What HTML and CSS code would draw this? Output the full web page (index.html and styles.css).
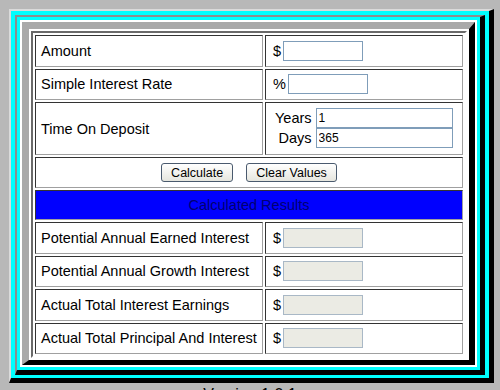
FILE: index.html
```html
<!DOCTYPE html>
<html lang="en">
<head>
    <meta charset="UTF-8">
    <meta name="viewport" content="width=device-width, initial-scale=1.0">
    <title>Simple Interest Calculator</title>
    <link rel="stylesheet" href="styles.css">
</head>
<body>

    <div class="frame-outer">
        <div class="frame-mid">
            <div class="frame-white">
                <div class="frame-inner">
                    <div class="calc">
                        <div class="cell label">Amount</div>
                        <div class="cell value">$<input type="text" class="field" id="amount"></div>

                        <div class="cell label">Simple Interest Rate</div>
                        <div class="cell value">%<input type="text" class="field" id="rate"></div>

                        <div class="cell label">Time On Deposit</div>
                        <div class="cell value">
                            <div class="time-grid">
                                <span>Years</span><input type="text" class="field wide" id="years" value="1">
                                <span>Days</span><input type="text" class="field wide" id="days" value="365">
                            </div>
                        </div>

                        <div class="cell actions">
                            <button class="btn" onclick="calculate()">Calculate</button>
                            <button class="btn" onclick="clearValues()">Clear Values</button>
                        </div>

                        <div class="cell results-head">Calculated Results</div>

                        <div class="cell label">Potential Annual Earned Interest</div>
                        <div class="cell value">$<input type="text" class="field output" id="earned" disabled></div>

                        <div class="cell label">Potential Annual Growth Interest</div>
                        <div class="cell value">$<input type="text" class="field output" id="growth" disabled></div>

                        <div class="cell label">Actual Total Interest Earnings</div>
                        <div class="cell value">$<input type="text" class="field output" id="total" disabled></div>

                        <div class="cell label">Actual Total Principal And Interest</div>
                        <div class="cell value">$<input type="text" class="field output" id="principal" disabled></div>
                    </div>
                </div>
            </div>
        </div>
    </div>

    <p class="version">Version 1.0.1</p>

    <script>
        function calculate() {
            const amount = parseFloat(document.getElementById("amount").value) || 0;
            const rate = parseFloat(document.getElementById("rate").value) || 0;
            const years = parseFloat(document.getElementById("years").value) || 0;
            const days = parseFloat(document.getElementById("days").value) || 365;

            const earned = amount * rate / 100;
            const growth = earned / amount * 100 || 0;
            const total = earned * years * (days / 365);

            document.getElementById("earned").value = earned.toFixed(2);
            document.getElementById("growth").value = growth.toFixed(2);
            document.getElementById("total").value = total.toFixed(2);
            document.getElementById("principal").value = (amount + total).toFixed(2);
        }

        function clearValues() {
            document.querySelectorAll(".field").forEach(function (field) {
                field.value = "";
            });
            document.getElementById("years").value = "1";
            document.getElementById("days").value = "365";
        }
    </script>

</body>
</html>
```

FILE: styles.css
```css
/* General Styles */
body {
    font-family: 'Liberation Sans', Arial, sans-serif;
    font-size: 14.5px;
    margin: 0;
    background: #b8b8b8;
    color: black;
}

/* Frames */
.frame-outer {
    margin: 9px 6px 0 9px;
    border-style: solid;
    border-width: 2px 5px 5px 2px;
    border-color: #dadada #000 #000 #dadada;
    background: #00ffff;
    padding: 4px 4px 3px 4px;
}
.frame-mid {
    border-style: solid;
    border-width: 2px 5px 5px 2px;
    border-color: #8e8e8e #000 #000 #8e8e8e;
    background: #00ffff;
    padding: 3px;
}
.frame-white {
    border: 2px solid #fff;
}
.frame-inner {
    border-style: solid;
    border-width: 7px 6px 5px 7px;
    border-color: #a9a9a9 #000 #000 #a9a9a9;
    background: #fff;
    padding: 2px;
}

/* Calculator Grid */
.calc {
    display: grid;
    grid-template-columns: 228px 1fr;
    gap: 2px;
    padding: 2px;
    background: #fff;
    border-style: solid;
    border-width: 2px;
    border-color: #6a6a6a #fff #fff #6a6a6a;
}
.cell {
    display: flex;
    align-items: center;
    min-height: 31.5px;
    box-sizing: border-box;
    border: 1px solid;
    border-color: #333 #a0a0a0 #a0a0a0 #333;
    background: #fff;
}
.label {
    padding: 0 5px;
}
.value {
    padding: 0 1px 0 7px;
}

/* Inputs */
.field {
    width: 80px;
    height: 20px;
    box-sizing: border-box;
    margin: 0 0 0 2px;
    padding: 1px 2px;
    border: 1px solid #7f9db9;
    font-family: 'Liberation Sans', Arial, sans-serif;
    font-size: 12px;
    background: #fff;
}
.field.output {
    background: #ebebe4;
    border-color: #a9b8c6;
}
.field.wide {
    width: 137px;
    margin: 0;
}
.time-grid {
    display: grid;
    grid-template-columns: auto 137px;
    column-gap: 4px;
    align-items: center;
    padding: 5px 0 6px 2px;
}
.time-grid span {
    text-align: right;
}

/* Buttons */
.actions {
    grid-column: span 2;
    justify-content: center;
    gap: 13px;
    min-height: 31px;
}
.btn {
    height: 19px;
    padding: 0 9px;
    border: 1px solid #4a5a6e;
    border-radius: 3px;
    background: linear-gradient(#ffffff, #e6e6de);
    font-family: 'Liberation Sans', Arial, sans-serif;
    font-size: 12.5px;
    color: black;
    cursor: pointer;
}

/* Results Heading */
.results-head {
    grid-column: span 2;
    justify-content: center;
    min-height: 30px;
    background: #0000ff;
    color: #000070;
}

/* Footer */
.version {
    margin: 3px 0 0;
    font-size: 16px;
    text-align: center;
}
```
